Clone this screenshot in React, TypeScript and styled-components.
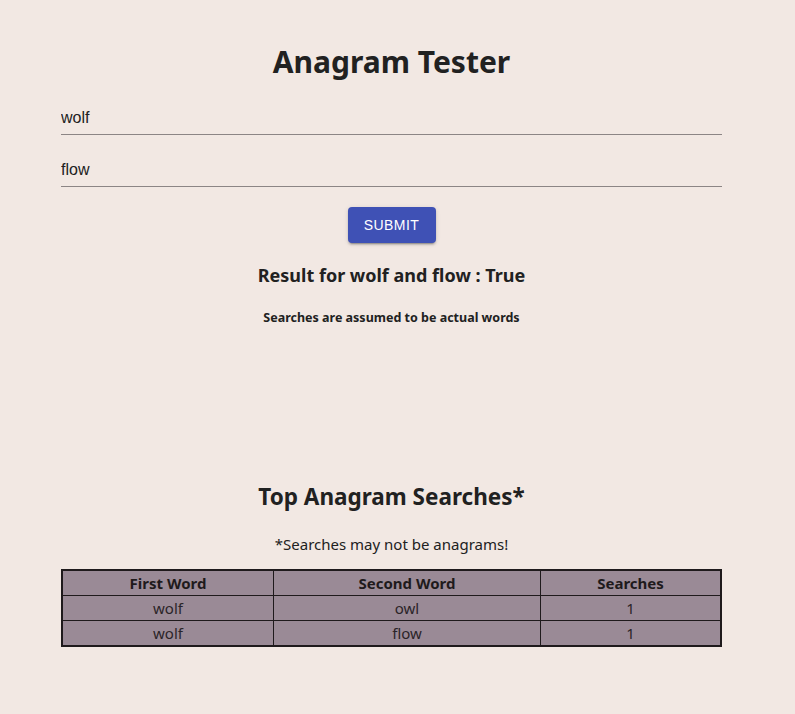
import React from "react";
import styled, { createGlobalStyle } from "styled-components";

const Global = createGlobalStyle`
  html, body { background: #f2e8e3; }
  body {
    margin: 8px;
    font-family: "Noto Sans", "Open Sans", sans-serif;
    color: #212121;
  }
`;

const Page = styled.div`
  width: 661px;
  margin-left: 53px;
  display: flex;
  flex-direction: column;
`;

const Title = styled.h1`
  margin: 33px 0 0;
  font-size: 30px;
  line-height: 42px;
  font-weight: 700;
  text-align: center;
`;

const Field = styled.div<{ $top: number }>`
  display: flex;
  align-items: center;
  height: 32px;
  margin-top: ${(p) => p.$top}px;
  border-bottom: 1px solid #8c8585;
  font-family: "Liberation Sans", Arial, sans-serif;
  font-size: 16px;
  color: #212121;
`;

const Input = styled.input`
  border: none;
  background: transparent;
  outline: none;
  font: inherit;
  color: inherit;
  width: 100%;
  padding: 0;
`;

const ButtonRow = styled.div`
  display: flex;
  justify-content: center;
  margin-top: 20px;
`;

const Submit = styled.button`
  width: 88px;
  height: 36px;
  border: none;
  border-radius: 4px;
  background: #3f51b5;
  color: #fff;
  font-family: "Liberation Sans", Arial, sans-serif;
  font-size: 14px;
  letter-spacing: 0.4px;
  text-transform: uppercase;
  box-shadow: 0 3px 1px -2px rgba(0,0,0,0.2), 0 2px 2px 0 rgba(0,0,0,0.14), 0 1px 5px 0 rgba(0,0,0,0.12);
  cursor: pointer;
`;

const Result = styled.h3`
  margin: 20px 0 0;
  font-size: 18px;
  line-height: 24px;
  font-weight: 700;
  text-align: center;
`;

const Note = styled.h5`
  margin: 22px 0 0;
  font-size: 12.5px;
  line-height: 18px;
  font-weight: 700;
  text-align: center;
`;

const Heading = styled.h2`
  margin: 154px 0 0;
  font-size: 22.5px;
  line-height: 32px;
  font-weight: 700;
  text-align: center;
`;

const Sub = styled.p`
  margin: 20px 0 0;
  font-size: 15px;
  line-height: 22px;
  text-align: center;
`;

const Table = styled.table`
  margin-top: 14px;
  width: 100%;
  border-collapse: collapse;
  border: 2px solid #1f1a1c;
  background: #9a8a96;
`;

const Th = styled.th<{ $w?: number }>`
  width: ${(p) => (p.$w ? `${p.$w}px` : "auto")};
  height: 24px;
  padding: 0;
  border: 1px solid #1f1a1c;
  font-size: 15px;
  font-weight: 700;
  color: #1f1a1c;
`;

const Td = styled.td`
  height: 24px;
  padding: 0;
  border: 1px solid #1f1a1c;
  font-size: 15px;
  color: #2a2428;
  text-align: center;
`;

const rows = [
  { a: "wolf", b: "owl", n: 1 },
  { a: "wolf", b: "flow", n: 1 },
];

export default function App() {
  return (
    <>
      <Global />
      <Page>
        <Title>Anagram Tester</Title>
        <Field $top={19}>
          <Input defaultValue="wolf" />
        </Field>
        <Field $top={19}>
          <Input defaultValue="flow" />
        </Field>
        <ButtonRow>
          <Submit>Submit</Submit>
        </ButtonRow>
        <Result>Result for wolf and flow : True</Result>
        <Note>Searches are assumed to be actual words</Note>
        <Heading>Top Anagram Searches*</Heading>
        <Sub>*Searches may not be anagrams!</Sub>
        <Table>
          <thead>
            <tr>
              <Th $w={210}>First Word</Th>
              <Th $w={266}>Second Word</Th>
              <Th>Searches</Th>
            </tr>
          </thead>
          <tbody>
            {rows.map((r, i) => (
              <tr key={i}>
                <Td>{r.a}</Td>
                <Td>{r.b}</Td>
                <Td>{r.n}</Td>
              </tr>
            ))}
          </tbody>
        </Table>
      </Page>
    </>
  );
}
